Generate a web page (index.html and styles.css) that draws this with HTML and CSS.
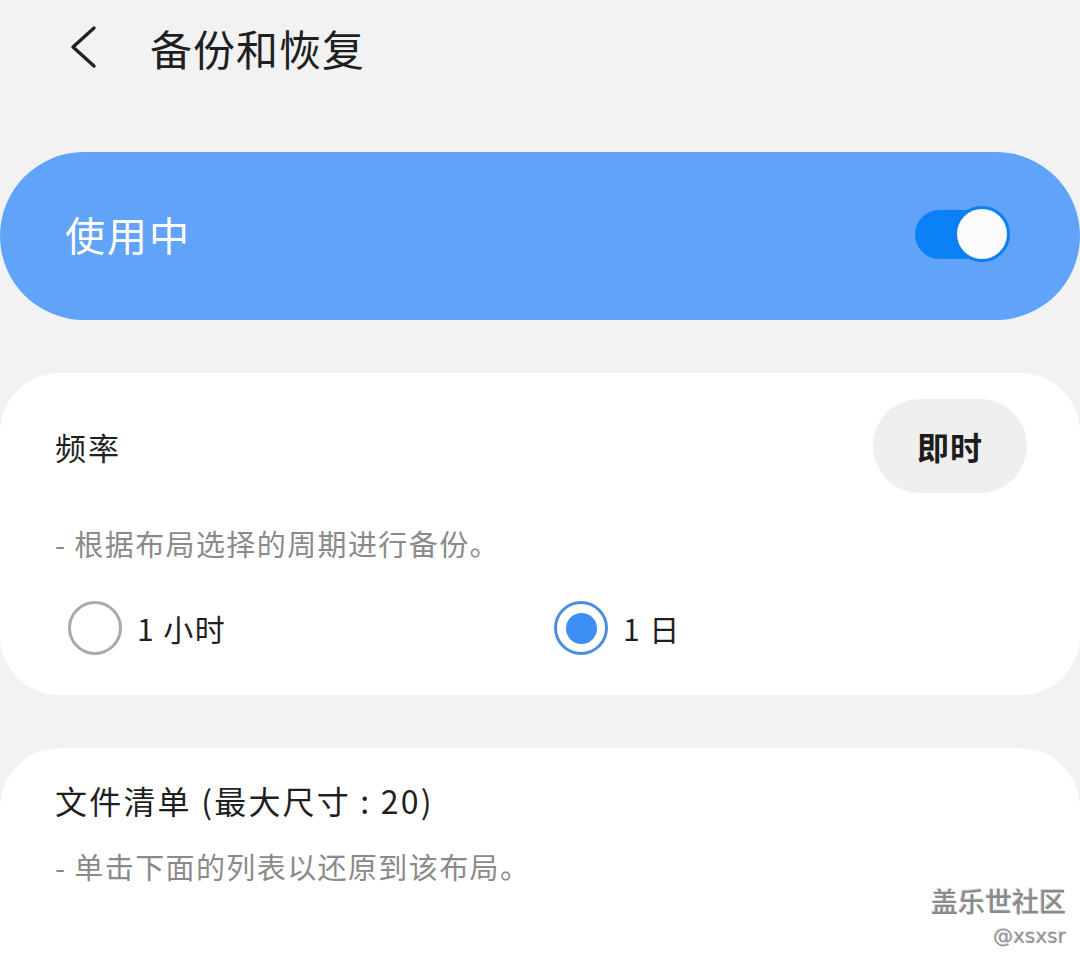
FILE: index.html
```html
<!DOCTYPE html>
<html lang="zh-CN">

<head>
    <meta charset="UTF-8">
    <meta name="viewport" content="width=device-width, initial-scale=1.0">
    <title>备份和恢复</title>
    <link rel="stylesheet" href="styles.css">
</head>

<body>
    <header class="topBar">
        <button class="back" aria-label="返回">
            <svg width="30" height="44" viewBox="0 0 30 44">
                <polyline points="26,3 5,22 26,41" fill="none" stroke="#222" stroke-width="3.4" stroke-linecap="round" stroke-linejoin="round" />
            </svg>
        </button>
        <h1>备份和恢复</h1>
    </header>

    <div class="master">
        <span class="masterLabel">使用中</span>
        <div class="switch on">
            <div class="knob"></div>
        </div>
    </div>

    <div class="card">
        <div class="row">
            <span class="rowTitle">频率</span>
            <button class="pill">即时</button>
        </div>
        <p class="hint">- 根据布局选择的周期进行备份。</p>
        <div class="radios">
            <label class="radio">
                <span class="dot"></span>
                <span>1 小时</span>
            </label>
            <label class="radio checked">
                <span class="dot"></span>
                <span>1 日</span>
            </label>
        </div>
    </div>

    <div class="card last">
        <div class="listTitle">文件清单 (最大尺寸 : 20)</div>
        <p class="hint">- 单击下面的列表以还原到该布局。</p>
    </div>

    <div class="watermark">
        <div class="wmName">盖乐世社区</div>
        <div class="wmUser">@xsxsr</div>
    </div>
</body>

</html>
```

FILE: styles.css
```css
* {
    box-sizing: border-box;
}

body {
    margin: 0;
    height: 972px;
    overflow: hidden;
    background-color: #f2f2f2;
    font-family: "Noto Sans CJK SC", "Noto Sans", sans-serif;
    color: #1f1f1f;
    display: flex;
    flex-direction: column;
    position: relative;
}

.topBar {
    height: 94px;
    display: flex;
    align-items: center;
    padding-left: 68px;
    flex-shrink: 0;
}

.back {
    background: none;
    border: none;
    padding: 0;
    width: 30px;
    height: 44px;
    display: flex;
}

.topBar h1 {
    margin: 0 0 0 52px;
    font-size: 42px;
    font-weight: 400;
    letter-spacing: 1px;
    color: #1f1f1f;
}

.master {
    margin-top: 58px;
    height: 168px;
    border-radius: 84px;
    background-color: #60a3f9;
    display: flex;
    align-items: center;
    justify-content: space-between;
    padding: 0 71px 4px 65px;
    flex-shrink: 0;
}

.masterLabel {
    color: #ffffff;
    font-size: 40px;
    letter-spacing: 2px;
}

.switch {
    width: 94px;
    height: 49px;
    border-radius: 25px;
    background-color: #0b80f7;
    position: relative;
}

.knob {
    position: absolute;
    right: -1px;
    top: -4px;
    width: 56px;
    height: 56px;
    border-radius: 50%;
    background-color: #fbfbfb;
    border: 3px solid #0b7ff2;
}

.card {
    margin-top: 53px;
    background-color: #ffffff;
    border-radius: 60px;
    padding: 26px 53px 40px 55px;
    flex-shrink: 0;
}

.row {
    height: 94px;
    display: flex;
    align-items: center;
    justify-content: space-between;
}

.rowTitle {
    font-size: 31px;
    letter-spacing: 2px;
}

.pill {
    width: 154px;
    height: 94px;
    border: none;
    border-radius: 47px;
    background-color: #efefef;
    font-family: inherit;
    font-size: 32px;
    font-weight: 700;
    color: #1c1c1c;
    letter-spacing: 1px;
}

.hint {
    margin: 30px 0 0;
    line-height: 40px;
    font-size: 29px;
    letter-spacing: 1.4px;
    color: #8a8a8a;
}

.radios {
    margin-top: 38px;
    display: grid;
    grid-template-columns: 1fr 1fr;
}

.radio {
    display: flex;
    align-items: center;
    gap: 15px;
    padding-left: 13px;
    font-size: 30px;
    letter-spacing: 1.5px;
    color: #1f1f1f;
}

.dot {
    width: 54px;
    height: 54px;
    border-radius: 50%;
    border: 3px solid #a9a9a9;
    display: flex;
    align-items: center;
    justify-content: center;
}

.checked .dot {
    border-color: #4a8fdc;
}

.checked .dot::after {
    content: "";
    width: 31px;
    height: 31px;
    border-radius: 50%;
    background-color: #3d8ef5;
}

.last {
    flex-grow: 1;
    flex-shrink: 1;
    border-radius: 60px 60px 0 0;
    padding-top: 30px;
}

.listTitle {
    font-size: 32px;
    line-height: 44px;
    letter-spacing: 2.2px;
}

.last .hint {
    margin-top: 24px;
}

.watermark {
    position: absolute;
    right: 14px;
    top: 882px;
    text-align: right;
    color: #8a8a8a;
    text-shadow: 1px 1px 0 #ffffff, -1px -1px 0 #d5d5d5;
}

.wmName {
    font-size: 27px;
    font-weight: 500;
    line-height: 38px;
}

.wmUser {
    font-family: "DejaVu Sans", sans-serif;
    font-size: 20px;
    line-height: 32px;
    color: #909090;
}
```
